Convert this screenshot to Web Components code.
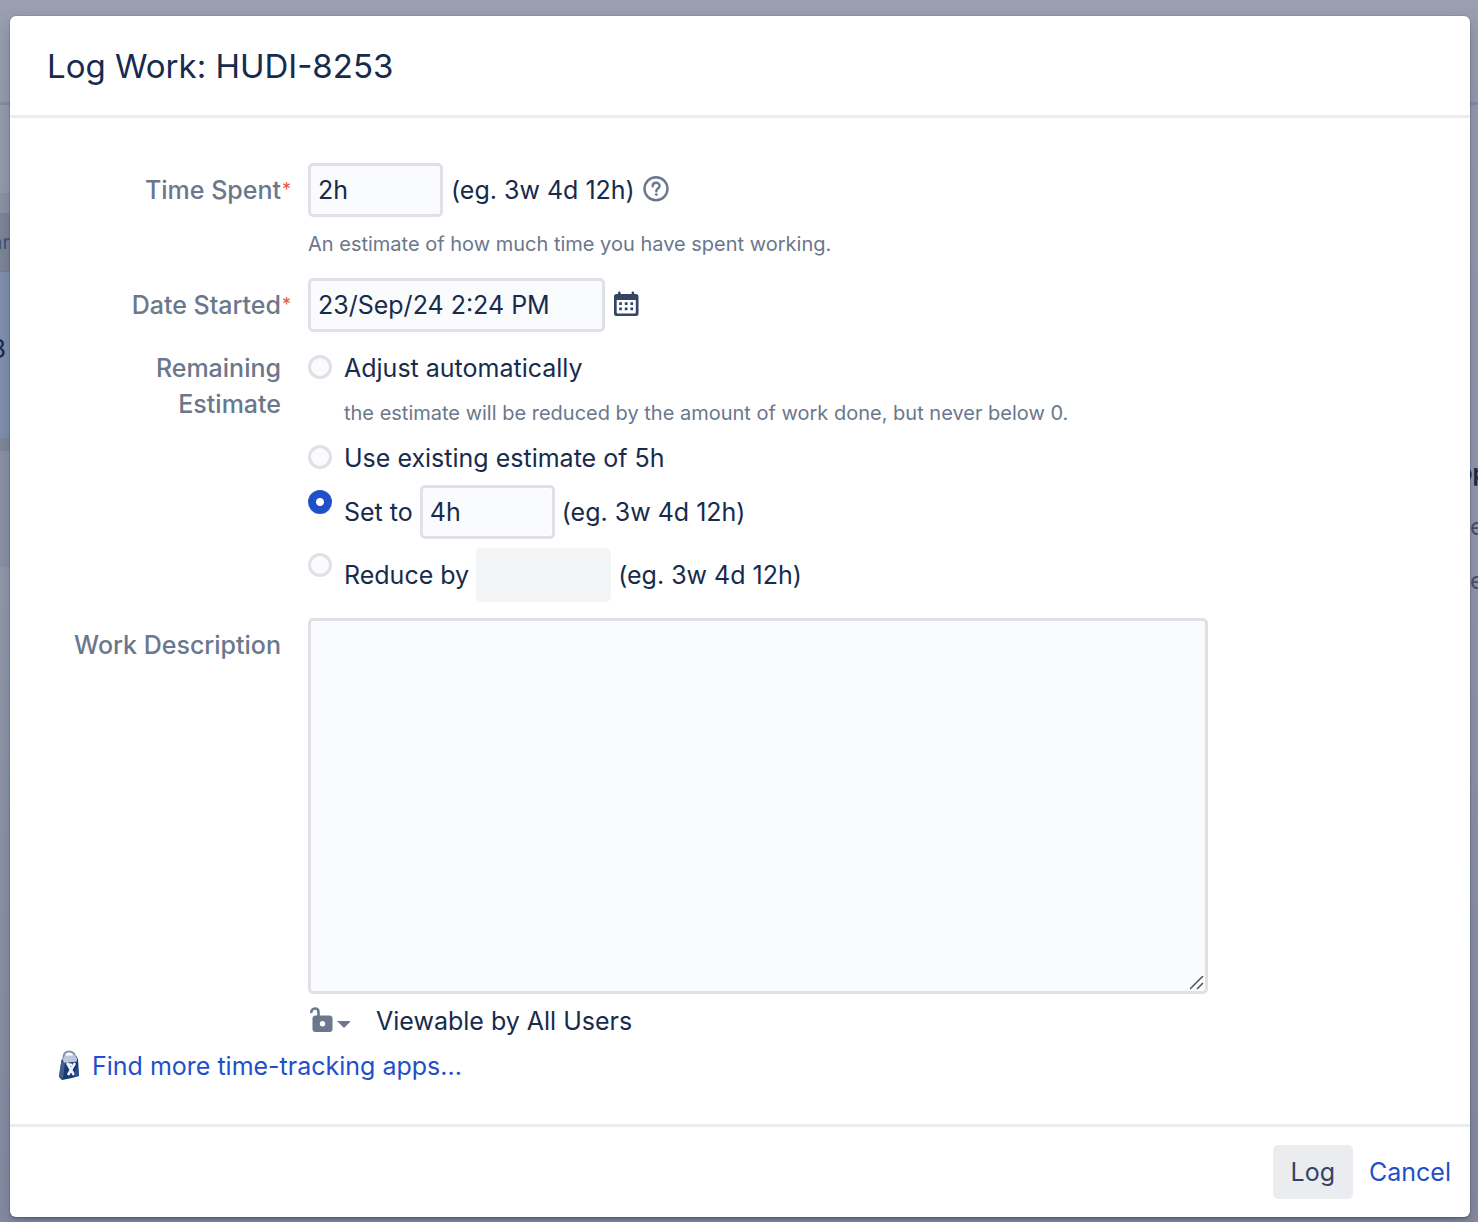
<!DOCTYPE html>
<html lang="en">
<head>
<meta charset="utf-8">
<title>Log Work</title>
<style>
html, body { margin: 0; min-height: 100%; }
body {
  display: grid; min-height: 100vh; overflow: hidden;
  font-family: Inter, "Liberation Sans", sans-serif; font-size: 25px; line-height: 36px;
  color: #172b4d; background: #969cad;
}
page-behind, log-dialog { grid-area: 1 / 1; }
</style>
</head>
<body>
<page-behind></page-behind>
<log-dialog>
  <span slot="title">Log Work: HUDI-8253</span>
  <work-form></work-form>
  <dialog-button slot="actions">Log</dialog-button>
  <dialog-button slot="actions" kind="link">Cancel</dialog-button>
</log-dialog>
<script>
const define = (name, html) => {
  const template = document.createElement('template');
  template.innerHTML = html;
  customElements.define(name, class extends HTMLElement {
    constructor() {
      super();
      this.attachShadow({ mode: 'open' }).append(template.content.cloneNode(true));
    }
  });
};

define('page-behind', `
<style>
  :host { display: grid; grid-template-rows: 102px 1fr; overflow: hidden; background: linear-gradient(#999fae, #969cad 110px, #9298aa 600px, #868ba0); }
  .below { border-top: 3px solid #878ca1; display: flex; justify-content: space-between; }
  .left { width: 10px; padding-top: 88px; }
  .left > div { display: flex; justify-content: flex-end; align-items: center; overflow: hidden; white-space: nowrap; box-sizing: border-box; }
  .gap { height: 20px; background: #8c94a5; }
  .head { height: 58px; font-size: 20px; color: #49536f; background: #7e8698; }
  .card { height: 167px; color: #17264b; background: #8290ad; border-top: 1px solid #73809b; padding: 0 4px 12px 0; }
  .shade { height: 13px; background: #808899; }
  .rest { height: 116px; background: #8b93a5; }
  .right { width: 8px; padding-top: 350px; font-size: 24px; line-height: 36px; color: #455170; }
  .right div { display: flex; justify-content: flex-start; margin-bottom: 18px; height: 36px; overflow: hidden; }
  .right b { color: #172b4d; margin-left: -12px; font-weight: 600; }
</style>
<div></div>
<div class="below">
  <div class="left"><div class="gap"></div><div class="head">ar</div><div class="card">3</div><div class="shade"></div><div class="rest"></div></div>
  <div class="right"><div><b>op</b></div><div>e</div><div>e</div></div>
</div>`);

define('log-dialog', `
<style>
  :host { display: flex; flex-direction: column; z-index: 1; margin: 16px 8px 5px 10px; background: #fff; border-radius: 6px; box-shadow: 0 0 0 1px rgba(9,30,66,.08), 0 2px 2px rgba(9,30,66,.2), 0 8px 18px rgba(9,30,66,.2); align-self: start; }
  header { border-bottom: 3px solid #ebecf0; padding: 30px 37px 29px; }
  h1 { margin: 0; font-size: 33px; line-height: 40px; font-weight: 400; }
  main { padding: 45px 48px 40px; }
  footer { border-top: 3px solid #ebecf0; padding: 18px 19px; display: flex; justify-content: flex-end; align-items: center; gap: 16px; }
</style>
<header><h1><slot name="title"></slot></h1></header>
<main><slot></slot></main>
<footer><slot name="actions"></slot></footer>`);

define('dialog-button', `
<style>
  :host { display: block; }
  button { font: inherit; height: 54px; border: 0; border-radius: 5px; padding: 0 18px; color: #344563; background: #ebecf0; cursor: pointer; }
  :host([kind=link]) button { padding: 0; background: none; color: #1f50c9; }
</style>
<button type="button"><slot></slot></button>`);

define('form-row', `
<style>
  :host { display: grid; grid-template-columns: 233px 1fr; column-gap: 17px; }
  .label { display: flex; justify-content: flex-end; padding-top: 9px; text-align: right; font-weight: 500; color: #6b778c; }
  .star { width: 10px; flex: none; font-size: 18px; line-height: 36px; color: #e5593c; visibility: hidden; font-weight: 400; }
  :host([required]) .star { visibility: visible; }
  :host([group]) { padding-top: 2px; }
  :host([group]) .label { padding-top: 0; }
</style>
<div class="label"><slot name="label"></slot><span class="star">*</span></div>
<div><slot></slot></div>`);

define('radio-option', `
<style>
  :host { display: grid; grid-template-columns: 24px 1fr; column-gap: 12px; align-items: start; }
  .body { display: flex; flex-wrap: wrap; align-items: center; column-gap: 7px; row-gap: 9px; }
</style>
<slot name="radio"></slot><div class="body"><slot></slot></div>`);

define('help-icon', `
<style>:host, svg { display: block; } svg { width: 26px; height: 28px; }</style>
<svg viewBox="0 0 26 28" fill="none" stroke="#6b778c" stroke-width="2.4"><circle cx="13" cy="12.800" r="11.500"/><path d="M9.700 10.200c0-4.600 6.900-4.400 6.900-.3 0 2.400-3.300 2.700-3.300 5.300" stroke-linecap="round"/><circle cx="13.300" cy="18.600" r="1.400" fill="#6b778c" stroke="none"/></svg>`);

define('calendar-icon', `
<style>:host, svg { display: block; } svg { width: 26px; height: 28px; }</style>
<svg viewBox="0 0 26 28" fill="#344563"><path fill-rule="evenodd" d="M3.500 3H5V1.700a1.300 1.300 0 0 1 2.600 0V3h11V1.700a1.300 1.300 0 0 1 2.600 0V3h1.800a2.500 2.500 0 0 1 2.500 2.500v17A2.500 2.500 0 0 1 23 25H3.500A2.500 2.500 0 0 1 1 22.500v-17A2.500 2.500 0 0 1 3.500 3zM3.700 9v12.200a1.200 1.200 0 0 0 1.200 1.200h16.700a1.200 1.200 0 0 0 1.200-1.200V9z"/><path d="M6.200 11.200h2.700v2.700H6.200zM11.800 11.200h2.700v2.700h-2.700zM17.400 11.200h2.700v2.700h-2.700zM6.200 16.600h2.700v2.700H6.200zM11.800 16.600h2.700v2.700h-2.700zM17.400 16.600h2.700v2.700h-2.700z"/></svg>`);

define('lock-icon', `
<style>:host, svg { display: block; } svg { width: 42px; height: 28px; }</style>
<svg viewBox="-2 0 42 28" fill="#6b778c"><path d="M1.300 6C1 3 3 1.500 5 1.500 7.300 1.500 8.500 3 8.500 5v4" fill="none" stroke="#6b778c" stroke-width="2.600"/><path fill-rule="evenodd" d="M5.500 8.500h14a3 3 0 0 1 3 3v10.500a3 3 0 0 1-3 3h-14a3 3 0 0 1-3-3V11.500a3 3 0 0 1 3-3zM12.500 14a2.700 2.700 0 1 0 0 5.400 2.700 2.700 0 0 0 0-5.400z"/><path d="M27 14h14L34 21z"/></svg>`);

define('bag-icon', `
<style>:host, svg { display: block; } svg { width: 22px; height: 32px; }</style>
<svg viewBox="0 0 22 32"><path d="M5.500 11C5 3 8 1.500 11 1.500c4 0 6 2 6.500 7" fill="none" stroke="#8796b3" stroke-width="2.200"/><path d="M3.500 10 8 6h10l2 3 1 17-7 2-10 2-3-3z" fill="#173a73"/><path d="M4.500 9.500 7 5.500h10l2 3v3L6 13z" fill="#bdc9db"/><path d="M3.500 10 7 13 5 29l-4-3z" fill="#435f8d"/><path d="m9 13 7 12M17 13 10 25M9 14l5 1" fill="none" stroke="#f1f5fa" stroke-width="2.600"/><path d="m16 27 5-2-1-8-3 5z" fill="#285293"/></svg>`);

define('work-form', `
<style>
  :host { display: block; }
  form { display: flex; flex-direction: column; gap: 16px; }
  input, textarea { font: inherit; color: inherit; box-sizing: border-box; margin: 0; border: 3px solid #dfe1e6; border-radius: 5px; background: #fafbfc; outline: none; }
  input[type=text] { width: 135px; height: 54px; padding: 0 7px; }
  input.date { width: 297px; }
  input[type=text]:disabled { background: #f4f5f7; border-color: #f4f5f7; }
  input[type=radio] { appearance: none; width: 24px; height: 24px; margin-top: 5px; border-radius: 50%; }
  input[type=radio]:checked { border-color: #2051c8; background: radial-gradient(circle, #fff 3.5px, #2051c8 4.5px); }
  textarea { display: block; width: 100%; max-width: 900px; height: 376px; padding: 7px; resize: both; }
  textarea::-webkit-resizer { background: url("data:image/svg+xml,%3Csvg xmlns='http://www.w3.org/2000/svg' width='15' height='15'%3E%3Cpath d='M0 13 13 0M7 13l6-6' stroke='%23505050' stroke-width='1.500'/%3E%3C/svg%3E") no-repeat; }
  .line { display: flex; align-items: center; gap: 8px; }
  .hint { font-size: 20px; color: #6b778c; }
  .line + .hint { margin-top: 9px; }
  .hint.wide { flex-basis: 100%; }
  .options { display: flex; flex-direction: column; gap: 9px; }
  .icon { font: inherit; border: 0; padding: 0; background: none; cursor: pointer; }
  .view { margin-top: 9px; gap: 26px; }
  .more { display: flex; align-items: center; gap: 12px; margin-top: -7px; }
  a { color: #1f50c9; text-decoration: none; }
</style>
<form>
  <form-row required>
    <label slot="label" for="spent">Time Spent</label>
    <div class="line"><input type="text" id="spent" value="2h"><span>(eg. 3w 4d 12h)</span><button type="button" class="icon" aria-label="Help"><help-icon></help-icon></button></div>
    <div class="hint">An estimate of how much time you have spent working.</div>
  </form-row>
  <form-row required>
    <label slot="label" for="date">Date Started</label>
    <div class="line"><input type="text" class="date" id="date" value="23/Sep/24 2:24 PM"><button type="button" class="icon" aria-label="Select a date"><calendar-icon></calendar-icon></button></div>
  </form-row>
  <form-row group>
    <span slot="label" id="remaining">Remaining Estimate</span>
    <div class="options" role="radiogroup" aria-labelledby="remaining">
      <radio-option><input slot="radio" type="radio" name="estimate" id="auto"><label for="auto">Adjust automatically</label><div class="hint wide">the estimate will be reduced by the amount of work done, but never below 0.</div></radio-option>
      <radio-option><input slot="radio" type="radio" name="estimate" id="leave"><label for="leave">Use existing estimate of 5h</label></radio-option>
      <radio-option><input slot="radio" type="radio" name="estimate" id="set" checked><label for="set">Set to</label><input type="text" value="4h" aria-label="New estimate"><span>(eg. 3w 4d 12h)</span></radio-option>
      <radio-option><input slot="radio" type="radio" name="estimate" id="reduce"><label for="reduce">Reduce by</label><input type="text" disabled aria-label="Reduction"><span>(eg. 3w 4d 12h)</span></radio-option>
    </div>
  </form-row>
  <form-row>
    <label slot="label" for="description">Work Description</label>
    <textarea id="description"></textarea>
    <div class="line view"><button type="button" class="icon" aria-label="Viewable by"><lock-icon></lock-icon></button><span>Viewable by All Users</span></div>
  </form-row>
  <div class="more"><bag-icon></bag-icon><a href="#apps">Find more time-tracking apps...</a></div>
</form>`);
</script>
</body>
</html>
